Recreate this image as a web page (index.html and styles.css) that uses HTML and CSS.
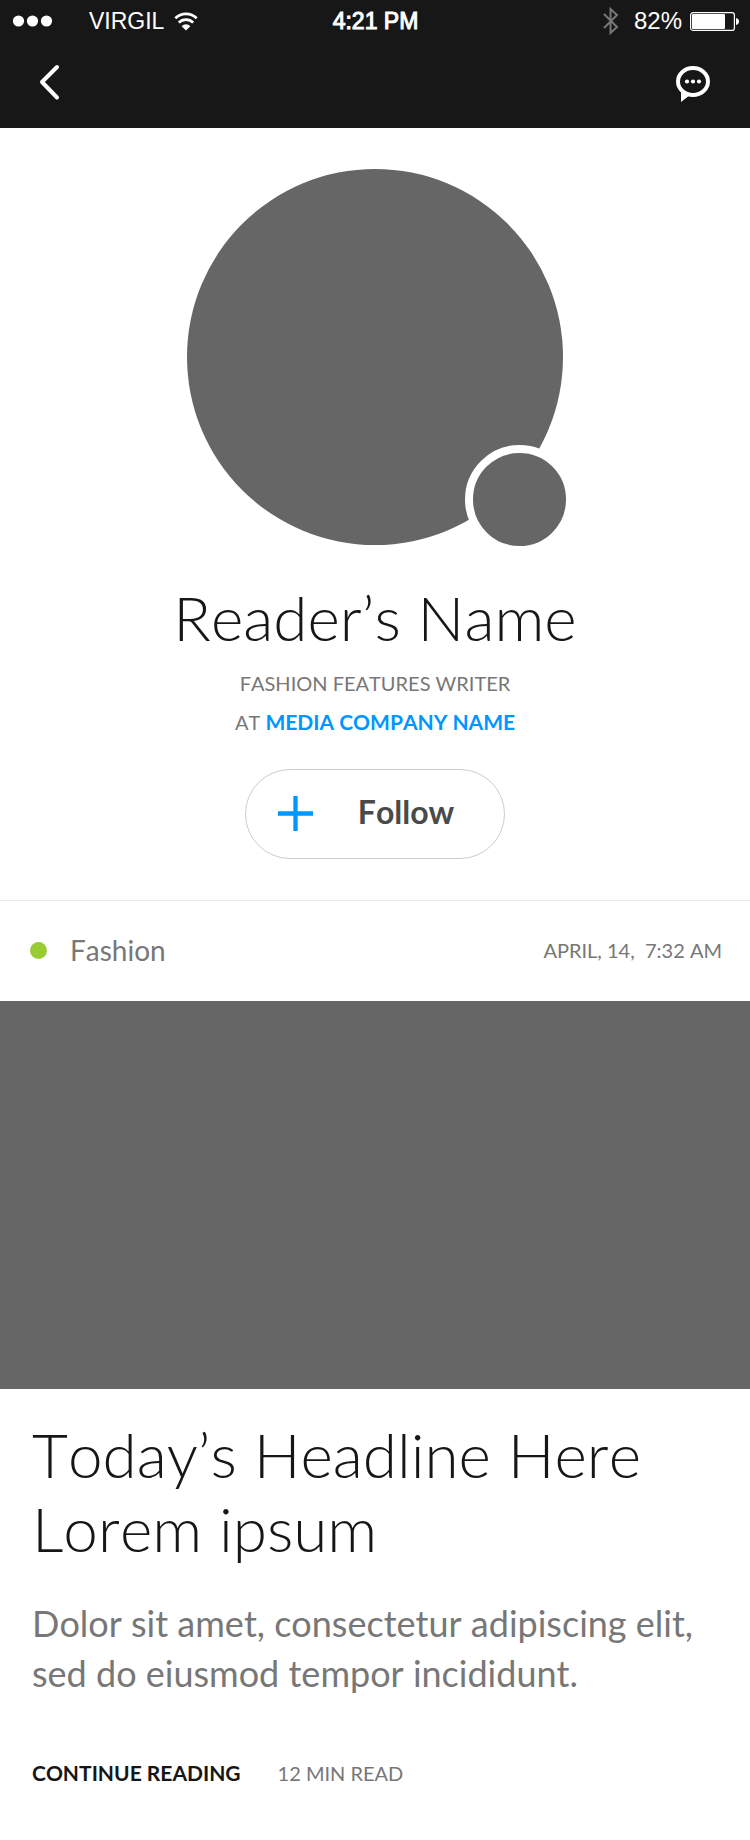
FILE: index.html
```html
<!DOCTYPE html>
<html lang="en">
<head>
<meta charset="utf-8">
<meta name="viewport" content="width=device-width, initial-scale=1">
<title>Reader’s Name</title>
<link rel="stylesheet" href="styles.css">
</head>
<body>
<header class="top">
  <div class="status">
    <div class="status-left">
      <svg class="signal" width="40" height="12" viewBox="0 0 40 12" aria-hidden="true"><circle cx="6.500" cy="6" r="5.600"/><circle cx="20.500" cy="6" r="5.600"/><circle cx="34.500" cy="6" r="5.600"/></svg>
      <span>VIRGIL</span>
      <svg class="wifi" width="24" height="19" viewBox="0 0 24 19" aria-hidden="true"><path d="M1.300 6.300a15.200 15.200 0 0 1 21.400 0M4.800 10.600a10.200 10.200 0 0 1 14.400 0" fill="none" stroke="#fff" stroke-width="2.700"/><path d="M12 18.600 7.600 14.200a6.200 6.200 0 0 1 8.800 0z"/></svg>
    </div>
    <time class="clock">4:21 PM</time>
    <div class="status-right">
      <svg class="bluetooth" width="16" height="28" viewBox="0 0 16 28" aria-hidden="true"><path d="M1 7l13 13-6.500 6V2L14 8 1 21" fill="none" stroke="#777" stroke-width="2"/></svg>
      <span class="charge">82%</span>
      <svg class="battery" width="49" height="19" viewBox="0 0 49 19" aria-hidden="true"><rect x=".6" y=".6" width="43.800" height="17.800" rx="2.500" fill="none" stroke="#fff" stroke-width="1.200"/><rect x="2" y="2" width="33" height="15" rx="1"/><path d="M46 6c4 .5 4 6.500 0 7z"/></svg>
    </div>
  </div>
  <nav class="nav">
    <button class="icon-button" type="button" aria-label="Back">
      <svg width="20" height="36" viewBox="0 0 20 36"><path d="M18 1 3 16l15 15.500" fill="none" stroke="#fff" stroke-width="4" stroke-linecap="round" stroke-linejoin="round"/></svg>
    </button>
    <button class="icon-button" type="button" aria-label="Messages">
      <svg width="34" height="36" viewBox="0 0 34 36"><ellipse cx="17" cy="15.500" rx="15" ry="13.500" fill="none" stroke="#fff" stroke-width="4"/><path d="M5 24v12l9-7z"/><circle cx="11" cy="15.500" r="2.100"/><circle cx="17" cy="15.500" r="2.100"/><circle cx="23" cy="15.500" r="2.100"/></svg>
    </button>
  </nav>
</header>
<main>
  <section class="profile">
    <div class="avatar"><div class="avatar-badge"></div></div>
    <h1 class="name">Reader’s Name</h1>
    <p class="role">FASHION FEATURES WRITER<br>AT <a class="company" href="#">MEDIA COMPANY NAME</a></p>
    <button class="follow" type="button">
      <svg width="35" height="35" viewBox="0 0 35 35" aria-hidden="true"><path d="M17.500 0v35M0 17.500h35" stroke="#0096ff" stroke-width="4.300"/></svg>
      <span class="follow-label">Follow</span>
    </button>
  </section>
  <article class="story">
    <div class="story-meta">
      <span class="category">Fashion</span>
      <time class="date">APRIL, 14,&nbsp; 7:32 AM</time>
    </div>
    <div class="photo"></div>
    <div class="story-body">
      <h2 class="headline">Today’s Headline Here Lorem ipsum</h2>
      <p class="summary">Dolor sit amet, consectetur adipiscing elit, sed do eiusmod tempor incididunt.</p>
      <div class="story-footer">
        <a class="continue" href="#">CONTINUE READING</a>
        <span>12 MIN READ</span>
      </div>
    </div>
  </article>
</main>
</body>
</html>
```
FILE: styles.css
```css
* { box-sizing: border-box; }
body { margin: 0; background: #fff; color: #161616; font-family: Lato, "Liberation Sans", sans-serif; font-kerning: none; }
h1, h2, p { margin: 0; font-weight: 300; }
button { margin: 0; padding: 0; border: 0; background: none; font: inherit; font-kerning: inherit; cursor: pointer; }
a { color: inherit; text-decoration: none; }
svg { display: block; flex: none; fill: #fff; overflow: visible; }

.top { background: #171717; color: #fff; padding-bottom: 26px; }
.status { display: grid; grid-template-columns: 1fr auto 1fr; align-items: center; height: 42px; padding: 0 11px 0 12px; font: 23px/28px "Liberation Sans", Arial, sans-serif; }
.status-left, .status-right { display: flex; align-items: center; }
.signal { margin-right: 37px; }
.wifi { margin-left: 10px; }
.status-right { justify-content: flex-end; }
.bluetooth { margin-right: 15px; }
.charge { font-size: 24px; }
.battery { margin-left: 8px; }
.clock { -webkit-text-stroke: 1px #fff; }
.nav { display: flex; justify-content: space-between; padding: 24px 40px 0 39px; }
.icon-button { display: block; }

.profile { display: flex; flex-direction: column; align-items: center; padding: 41px 24px; border-bottom: 1px solid #ebebeb; }
.avatar { position: relative; width: 376px; height: 376px; border-radius: 50%; background: #666; }
.avatar-badge { position: absolute; right: -11px; bottom: -9px; width: 109px; height: 109px; border: 8px solid #fff; border-radius: 50%; background: #666; }
.name { margin-top: 35px; font-size: 62px; line-height: 74px; text-align: center; }
.role { margin-top: 10px; color: #777; font-size: 20px; font-weight: 400; line-height: 39px; text-align: center; }
.company { color: #0096ff; font-size: 21px; font-weight: 700; line-height: 20px; }
.follow { display: flex; align-items: center; gap: 45px; height: 90px; margin-top: 27px; padding: 0 50px 1px 32px; border: 1px solid #ccc; border-radius: 45px; color: #4a4a4a; font-size: 32px; font-weight: 700; line-height: 40px; }
.follow-label { padding-bottom: 4px; }

.story-meta { display: flex; align-items: center; justify-content: space-between; height: 100px; padding: 0 28px 2px 30px; color: #777; }
.category { display: flex; align-items: center; gap: 23px; font-size: 28px; line-height: 32px; }
.category::before { content: ""; width: 17px; height: 17px; border-radius: 50%; background: #9c3; }
.date { font-size: 20px; }
.photo { height: 388px; background: #666; }
.story-body { padding: 28px 32px; }
.headline { max-width: 640px; font-size: 62px; line-height: 74px; }
.summary { margin-top: 33px; color: #777; font-size: 36px; font-weight: 400; line-height: 50px; }
.story-footer { display: flex; align-items: baseline; gap: 37px; margin-top: 55px; color: #777; font-size: 20px; line-height: 39px; }
.continue { color: #161616; font-size: 21px; font-weight: 700; }
```
